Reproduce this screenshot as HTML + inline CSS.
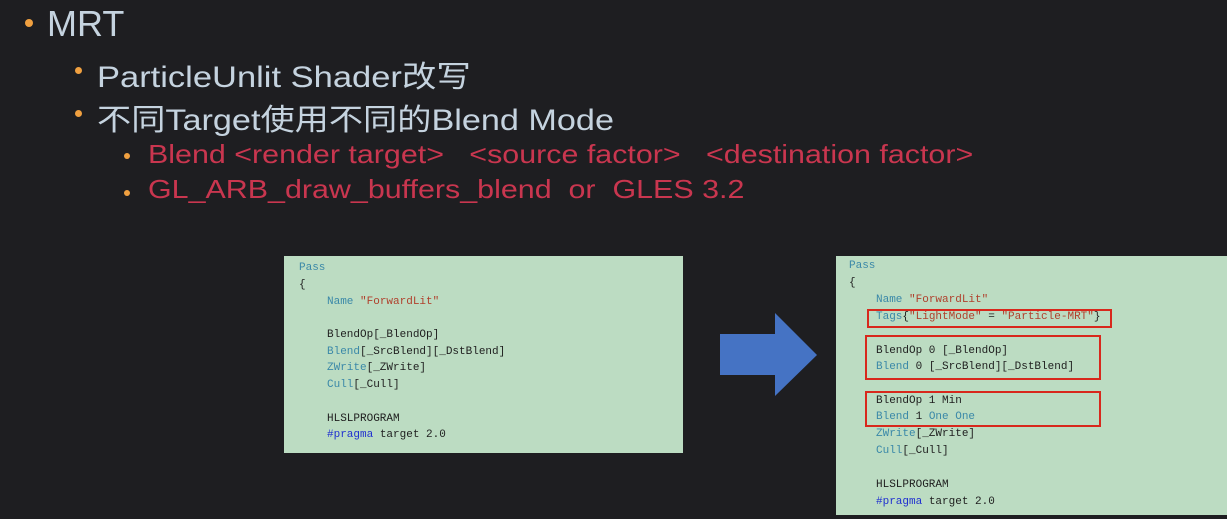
<!DOCTYPE html>
<html><head><meta charset="utf-8"><style>
html,body{margin:0;padding:0;}
body{width:1227px;height:519px;background:#1e1e21;position:relative;overflow:hidden;font-family:"Liberation Sans","Noto Sans CJK SC",sans-serif;}
.t{position:absolute;white-space:nowrap;color:#c5d3df;transform-origin:0 0;}
.dot{position:absolute;border-radius:50%;background:#f0a040;}
.red{color:#c9364f;}
.panel{position:absolute;background:#bcdcc2;font-family:"Liberation Mono",monospace;font-size:11px;color:#1e1e1e;}
.panel div{position:absolute;white-space:pre;line-height:14px;}
.k{color:#3a88a8}.s{color:#b0402c}.p{color:#2030d0}
.box{position:absolute;border:2px solid #d8281c;box-sizing:border-box;}
</style></head><body>
<div class="dot" style="left:25px;top:19px;width:8px;height:8px"></div>
<div class="t" style="left:47px;top:3px;font-size:36px">MRT</div>
<div class="dot" style="left:75px;top:67px;width:7px;height:7px"></div>
<div class="t" style="left:97px;top:52px;font-size:30px;transform:scaleX(1.15)">ParticleUnlit Shader改写</div>
<div class="dot" style="left:75px;top:110px;width:7px;height:7px"></div>
<div class="t" style="left:97px;top:95px;font-size:30px;transform:scaleX(1.14)">不同Target使用不同的Blend Mode</div>
<div class="dot" style="left:124px;top:153px;width:6px;height:6px"></div>
<div class="t red" style="left:148px;top:139px;font-size:26px;transform:scaleX(1.17)">Blend &lt;render target&gt;&nbsp;&nbsp; &lt;source factor&gt;&nbsp;&nbsp; &lt;destination factor&gt;</div>
<div class="dot" style="left:124px;top:190px;width:6px;height:6px"></div>
<div class="t red" style="left:148px;top:174px;font-size:26px;transform:scaleX(1.17)">GL_ARB_draw_buffers_blend&nbsp; or&nbsp; GLES 3.2</div>

<div class="panel" style="left:284px;top:256px;width:399px;height:197px">
<div class="k" style="left:15px;top:5px">Pass</div>
<div style="left:15px;top:22px">{</div>
<div style="left:43px;top:39px"><span class="k">Name</span> <span class="s">"ForwardLit"</span></div>
<div style="left:43px;top:72px">BlendOp[_BlendOp]</div>
<div style="left:43px;top:89px"><span class="k">Blend</span>[_SrcBlend][_DstBlend]</div>
<div style="left:43px;top:105px"><span class="k">ZWrite</span>[_ZWrite]</div>
<div style="left:43px;top:122px"><span class="k">Cull</span>[_Cull]</div>
<div style="left:43px;top:156px">HLSLPROGRAM</div>
<div style="left:43px;top:172px"><span class="p">#pragma</span> target 2.0</div>
</div>

<svg style="position:absolute;left:0;top:0" width="1227" height="519"><polygon points="720,334 775,334 775,313 817,355 775,396 775,375 720,375" fill="#4573c4"/></svg>

<div class="panel" style="left:836px;top:256px;width:391px;height:259px">
<div class="k" style="left:13px;top:3px">Pass</div>
<div style="left:13px;top:20px">{</div>
<div style="left:40px;top:37px"><span class="k">Name</span> <span class="s">"ForwardLit"</span></div>
<div style="left:40px;top:54px"><span class="k">Tags</span>{<span class="s">"LightMode"</span> = <span class="s">"Particle-MRT"</span>}</div>
<div style="left:40px;top:88px">BlendOp 0 [_BlendOp]</div>
<div style="left:40px;top:104px"><span class="k">Blend</span> 0 [_SrcBlend][_DstBlend]</div>
<div style="left:40px;top:138px">BlendOp 1 Min</div>
<div style="left:40px;top:154px"><span class="k">Blend</span> 1 <span class="k">One One</span></div>
<div style="left:40px;top:171px"><span class="k">ZWrite</span>[_ZWrite]</div>
<div style="left:40px;top:188px"><span class="k">Cull</span>[_Cull]</div>
<div style="left:40px;top:222px">HLSLPROGRAM</div>
<div style="left:40px;top:239px"><span class="p">#pragma</span> target 2.0</div>
<div class="box" style="left:31px;top:53px;width:245px;height:19px"></div>
<div class="box" style="left:29px;top:79px;width:236px;height:45px"></div>
<div class="box" style="left:29px;top:135px;width:236px;height:36px"></div>
</div>
</body></html>
